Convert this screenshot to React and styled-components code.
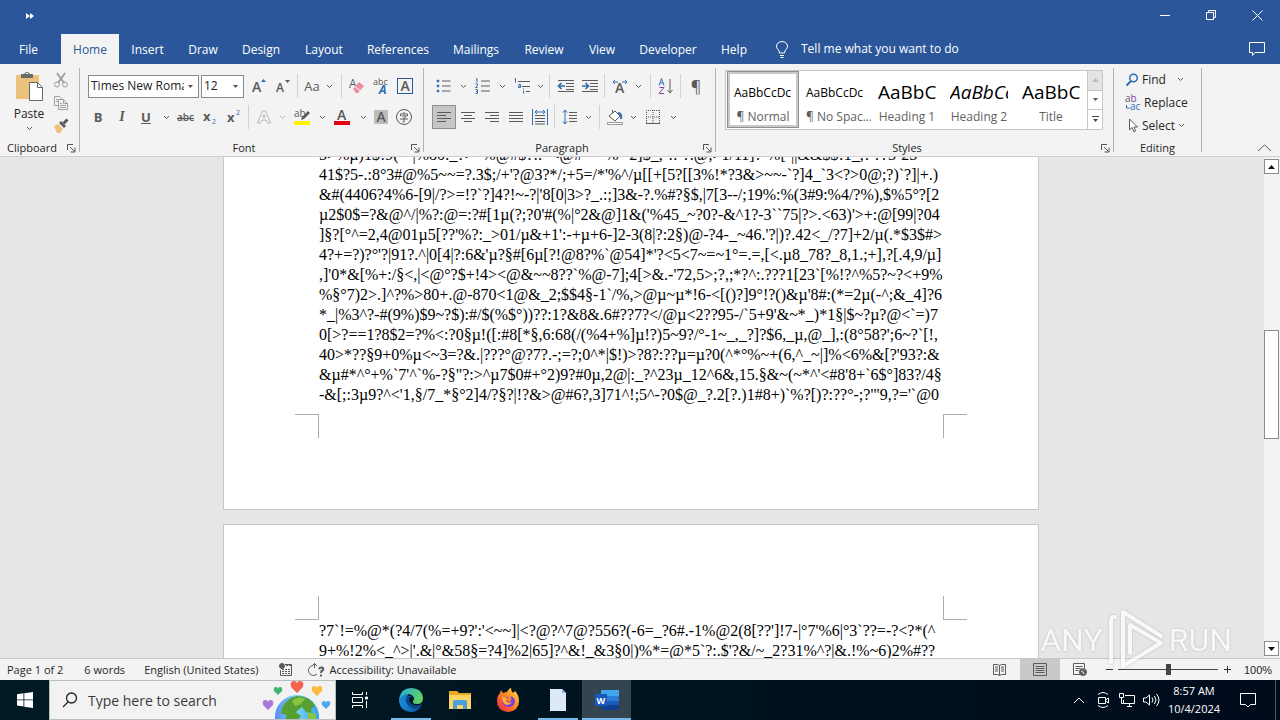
import React from "react";
import styled, { createGlobalStyle, css } from "styled-components";

const ui = `"Open Sans", "Noto Sans", sans-serif`;
const BLUE = "#2b579a";
const LINK = "#2f6db5";
const INK = "#5a5a5a";

const GlobalStyle = createGlobalStyle`
  * { box-sizing: border-box; }
  html, body, #root { height: 100%; margin: 0; }
  body { overflow: hidden; font: 12px/16px ${ui}; color: #262626; }
  button, input, select { font: inherit; color: inherit; margin: 0; padding: 0; border: 0; background: none; border-radius: 0; }
  svg { display: block; flex: none; overflow: visible; }
`;

const Desktop = styled.div`
  position: relative;
  display: flex;
  flex-direction: column;
  height: 100vh;
`;

/* ---------- title bar and tabs ---------- */
const TitleBar = styled.header`
  display: flex;
  align-items: center;
  height: 34px;
  flex: none;
  padding: 0 0 4px 20px;
  background: ${BLUE};
  color: #fff;
`;
const Spacer = styled.div`
  flex: 1;
`;
const MoreButton = styled.button`
  display: grid;
  place-items: center;
  width: 20px;
  height: 30px;
  padding-top: 2px;
`;
const WindowButton = styled.button`
  display: grid;
  place-items: center;
  width: 46px;
  height: 30px;
`;
const TabBar = styled.nav`
  display: flex;
  height: 30px;
  flex: none;
  background: ${BLUE};
  color: #fff;
`;
const Tab = styled.button`
  width: ${(p) => p.$w}px;
  height: 30px;
  padding-top: 2px;
  white-space: nowrap;
  text-align: center;
  ${(p) => p.$active && css`background: #f3f3f3; color: ${BLUE};`}
  ${(p) => p.$file && css`margin-right: 4px;`}
`;
const TellMe = styled.label`
  display: flex;
  align-items: center;
  gap: 13px;
  margin-left: 16px;
  input { width: 200px; outline: 0; }
  input::placeholder { color: #fff; opacity: 1; }
`;
const CommentButton = styled.button`
  display: grid;
  place-items: center;
  width: 46px;
`;

/* ---------- ribbon ---------- */
const Ribbon = styled.section`
  display: flex;
  height: 93px;
  flex: none;
  background: #f3f3f3;
  border-bottom: 1px solid #cfcfcf;
`;
const Group = styled.div`
  position: relative;
  display: flex;
  flex-direction: column;
  width: ${(p) => p.$w}px;
  padding: ${(p) => p.$pad || "4px 6px 0"};
  margin: 4px 0 4px;
  border-right: 1px solid #b4b4b4;
`;
const GroupFooter = styled.div`
  position: absolute;
  left: 0;
  right: 0;
  bottom: -4px;
  display: flex;
  align-items: center;
  height: 16px;
  font-size: 11px;
  span { flex: 1; text-align: center; }
  button { width: 15px; height: 15px; display: grid; place-items: center; }
`;
const ToolRow = styled.div`
  display: flex;
  align-items: center;
  height: 28px;
  margin-bottom: 3px;
  padding-left: ${(p) => (p.$inset ? 2 : 0)}px;
`;
const Tool = styled.button`
  display: grid;
  place-items: center;
  flex: none;
  width: ${(p) => p.$w || 24}px;
  height: ${(p) => p.$h || 24}px;
  color: ${INK};
  font-size: ${(p) => p.$size || 13}px;
  font-weight: ${(p) => (p.$bold ? 700 : 400)};
  font-style: ${(p) => (p.$italic ? "italic" : "normal")};
  font-family: ${(p) => (p.$serif ? `"Liberation Serif", serif` : ui)};
  text-decoration: ${(p) => p.$deco || "none"};
  ${(p) => p.$on && css`background: #c6c6c6; box-shadow: inset 0 0 0 1px #8f8f8f;`}
`;
const Divider = styled.span`
  flex: none;
  width: 1px;
  height: 24px;
  margin: 0 ${(p) => p.$r || 3}px 0 ${(p) => p.$l || 2}px;
  background: #d2d2d2;
`;
const ComboBox = styled.label`
  position: relative;
  width: ${(p) => p.$w}px;
  height: 23px;
  margin-right: ${(p) => p.$gap}px;
  border: 1px solid #8a8a8a;
  background: #fff;
  display: flex;
  align-items: center;
  select { appearance: none; width: 100%; padding: 0 14px 0 2px; outline: 0; overflow: hidden; color: #222; }
  svg { position: absolute; right: 4px; top: 9px; pointer-events: none; }
`;
const ClipboardBody = styled.div`
  display: flex;
  gap: 3px;
`;
const PasteButton = styled.button`
  display: flex;
  flex-direction: column;
  align-items: center;
  width: 42px;
  gap: 4px;
`;
const SmallStack = styled.div`
  display: flex;
  flex-direction: column;
  margin-top: -3px;
`;

const Gallery = styled.div`
  display: flex;
  height: 60px;
  margin-top: -2px;
  border: 1px solid #c6c6c6;
  background: #fff;
`;
const StyleCard = styled.button`
  display: flex;
  flex-direction: column;
  width: 72px;
  height: 57px;
  margin-left: ${(p) => (p.$on ? 1 : 0)}px;
  padding: 8px 7px 0;
  overflow: hidden;
  text-align: center;
  ${(p) => p.$on && css`box-shadow: inset 0 0 0 1px #8f8f8f, inset 0 0 0 3px #c9c9c9;`}
`;
const Preview = styled.span`
  width: 58px;
  height: 30px;
  line-height: 27px;
  overflow: hidden;
  white-space: nowrap;
  text-align: left;
  color: #000;
  font-size: ${(p) => (p.$big ? 19 : 12)}px;
  font-style: ${(p) => (p.$italic ? "italic" : "normal")};
`;
const CardName = styled.span`
  width: 58px;
  color: #5f5f5f;
  white-space: nowrap;
`;
const GalleryScroll = styled.div`
  display: flex;
  flex-direction: column;
  width: 15px;
  border-left: 1px solid #c6c6c6;
  button { flex: 1; display: grid; place-items: center; border-top: 1px solid #c6c6c6; }
  button:first-child { background: #e3e3e3; border-top: 0; }
`;
const EditButton = styled.button`
  display: flex;
  align-items: center;
  gap: 3px;
  height: 23px;
  text-align: left;
  > span { margin-right: ${(p) => p.$gap || 0}px; }
`;
const RibbonEnd = styled.div`
  flex: 1;
  display: flex;
  align-items: flex-end;
  justify-content: flex-end;
  padding: 0 8px 4px 0;
`;

/* ---------- document ---------- */
const Workspace = styled.main`
  flex: 1;
  display: flex;
  min-height: 0;
  background: #e6e6e6;
`;
const Canvas = styled.div`
  flex: 1;
  display: flex;
  flex-direction: column;
  align-items: center;
  gap: 14px;
  padding-right: 2px;
  overflow: hidden;
`;
const Page = styled.article`
  flex: none;
  width: 816px;
  border: 1px solid #c8c8c8;
  background: #fff;
  ${(p) => p.$scrolled ? css`margin-top: -13px; padding-bottom: 71px;` : css`padding-top: 71px; height: 300px;`}
`;
const Lines = styled.div`
  padding-left: 95px;
  font: 16px/20px "Liberation Serif", "Times New Roman", serif;
  color: #000;
  white-space: pre;
  p { margin: 0; }
`;
const Corners = styled.div`
  display: flex;
  justify-content: space-between;
  height: 24px;
  margin: ${(p) => (p.$foot ? "9px 71px 0" : "0 71px 1px")};
  span {
    width: 24px;
    border: 0 solid #ababab;
    ${(p) => (p.$foot ? "border-top-width: 1px;" : "border-bottom-width: 1px;")}
  }
  span:first-child { border-right-width: 1px; }
  span:last-child { border-left-width: 1px; }
`;
const ScrollBar = styled.div`
  display: flex;
  flex-direction: column;
  width: 16px;
  padding: 2px 1px 2px 0;
  background: #f3f3f3;
  button { height: 15px; display: grid; place-items: center; background: #fff; border: 1px solid #8c8c8c; }
`;
const ScrollTrack = styled.div`
  flex: 1;
  display: flex;
  flex-direction: column;
  &::before { content: ""; flex: 157; }
  &::after { content: ""; flex: 204; }
`;
const ScrollThumb = styled.div`
  flex: 108;
  background: #fff;
  border: 1px solid #8c8c8c;
`;

/* ---------- status bar ---------- */
const StatusBar = styled.footer`
  display: flex;
  align-items: center;
  height: 22px;
  flex: none;
  padding-left: 7px;
  font-size: 11px;
  background: #f3f3f3;
  border-top: 1px solid #c6c6c6;
`;
const StatusItem = styled.span`
  display: flex;
  align-items: center;
  gap: 4px;
  margin-right: ${(p) => p.$gap}px;
  white-space: nowrap;
`;
const ViewButton = styled.button`
  display: grid;
  place-items: center;
  width: 40px;
  height: 21px;
  background: ${(p) => (p.$on ? "#c9c9c9" : "none")};
`;
const ZoomButton = styled.button`
  display: grid;
  place-items: center;
  width: 18px;
  height: 20px;
`;
const ZoomSlider = styled.input`
  appearance: none;
  width: 100px;
  height: 12px;
  background: linear-gradient(#444, #444) center / 100% 1px no-repeat;
  &::-webkit-slider-thumb { appearance: none; width: 5px; height: 11px; background: #444; }
`;
const ZoomValue = styled.button`
  width: 44px;
  font: 11px/16px "Liberation Sans", sans-serif;
`;

/* ---------- taskbar ---------- */
const Taskbar = styled.footer`
  display: flex;
  align-items: stretch;
  height: 40px;
  flex: none;
  background: linear-gradient(90deg, #001a23, #001320 55%, #000b1c);
  color: #fff;
`;
const TaskButton = styled.button`
  display: grid;
  place-items: center;
  width: ${(p) => p.$w || 49}px;
  background: ${(p) => (p.$active ? "#34454f" : "none")};
  box-shadow: ${(p) => (p.$active ? "inset 0 -2px #76b9ed" : "none")};
  ${(p) => p.$open && css`
    background: linear-gradient(#76b9ed, #76b9ed) center bottom / 40px 2px no-repeat;
  `}
`;
const SearchBox = styled.label`
  display: flex;
  align-items: center;
  width: 287px;
  padding-left: 12px;
  background: #f2f2f2;
  border: 1px solid #b9bec1;
  color: #333;
  overflow: hidden;
  input { flex: 1; min-width: 0; padding: 2px 0 0 10px; font-size: 14px; outline: 0; background: transparent; }
  input::placeholder { color: #3b3b3b; opacity: 1; }
  > svg:last-child { align-self: flex-end; }
`;
const Clock = styled.time`
  width: 62px;
  padding-top: 2px;
  text-align: center;
  font-size: 11px;
  line-height: 18px;
`;
const DesktopEdge = styled.button`
  width: 5px;
  margin-left: 4px;
  border-left: 1px solid #4b5662;
`;

const Watermark = styled.div`
  position: absolute;
  right: 48px;
  bottom: 48px;
  display: flex;
  align-items: center;
  gap: 4px;
  font: 32px/64px Roboto, "Liberation Sans", sans-serif;
  color: #fff;
  opacity: 0.75;
  pointer-events: none;
  filter: drop-shadow(0 0 1px #a8a8a8);
`;

/* ---------- icons ---------- */
const Svg = ({ s = 16, w, h, children, ...rest }) => (
  <svg width={w || s} height={h || s} viewBox={`0 0 ${w || s} ${h || s}`} fill="none" stroke={INK} aria-hidden="true" {...rest}>
    {children}
  </svg>
);
const Chevron = ({ c = INK }) => <Svg w={7} h={5} stroke={c}><path d="M1 1l2.500 2.500L6 1" /></Svg>;
const Caret = ({ up, c = "#555" }) => <Svg w={7} h={4} stroke="none" fill={c}><path d={up ? "M0 4h7L3.500 0z" : "M1 0h5L3.500 3z"} /></Svg>;
const Launcher = () => <Svg s={9} stroke="#555"><path d="M.5 6V.5H6M3 3l4.500 4.500M8 3.500V8H3.500" /></Svg>;
const T = ({ children, size = 9, fill = INK, ...p }) => (
  <text stroke="none" fill={fill} fontFamily="Open Sans, sans-serif" fontSize={size} {...p}>{children}</text>
);
const Drop = ({ label, w = 16, c }) => <Tool $w={w} aria-label={label}><Chevron c={c} /></Tool>;

const PasteIcon = () => (
  <Svg w={28} h={31}>
    <path d="M1 4h23v24H1z" fill="#ebc27c" stroke="none" />
    <path d="M6 7V3h3q3-4 6 0h3v4z" fill="#6b6b6b" stroke="none" /><path d="M11 2.500h2" stroke="#fff" />
    <path d="M14.500 11.500h8l5 5v13h-13z" fill="#fff" stroke="#666" /><path d="M22.500 11.500v5h5" stroke="#666" />
  </Svg>
);
const CutIcon = () => <Svg stroke="#9b9b9b"><path d="M4 1l7 10M12 1L5 11" strokeWidth="1.800" /><circle cx="4" cy="12.500" r="2.500" /><circle cx="12" cy="12.500" r="2.500" /></Svg>;
const CopyIcon = () => <Svg stroke="#a0a0a0"><path d="M5.500 10.500h-4v-9h5l2 2v1M5.500 4.500h5l4 4v6h-9zM10.500 4.500v4h4M3 4.500h2M3 6.500h2M7 8.500h2M7 10.500h6M7 12.500h6" /></Svg>;
const PainterIcon = () => <Svg><path d="M1 8l4-2 5 5-3 4H4z" fill="#ebc27c" stroke="none" /><path d="M6 5l5 5 2-2-5-5z" fill={INK} stroke="none" /><path d="M10.500 5.500l4-4" strokeWidth="3" /></Svg>;
const GrowIcon = ({ down }) => (
  <Svg><T x="1" y="14" size={down ? 12 : 14} fontWeight="600">A</T><path d={down ? "M10 2h5l-2.500 3z" : "M10 4h5l-2.500-3z"} fill={down ? INK : LINK} stroke="none" /></Svg>
);
const EraserIcon = () => <Svg><T x="0" y="10" size={12}>A</T><path d="M4 11l6-7 5 4-6 7H7z" fill="#ee8ba0" stroke="none" /><path d="M6 8.500l5 4" stroke="#fff" /></Svg>;
const PhoneticIcon = () => <Svg><T x="0" y="7" size={9}>abc</T><T x="6" y="16" size={12} fill={LINK} fontWeight="700" fontStyle="italic">A</T></Svg>;
const BoxedA = () => <Svg><rect x=".5" y=".5" width="15" height="15" stroke={BLUE} /><T x="3.500" y="13" size={14} fontWeight="600">A</T></Svg>;
const OutlineA = () => <Svg stroke="#b5b5b5"><path d="M1.500 14L6.500 2h3l5 12h-3L10 11H6L4.500 14zM7 8.500h2L8 5.500z" fill="#f8f8f8" /></Svg>;
const HighlightIcon = () => <Svg><T x="0" y="8" size={10}>ab</T><path d="M7 11l1-3 6-6 2 2-6 6z" fill={INK} stroke="none" /><path d="M0 12h16v4H0z" fill="#fff200" stroke="none" /></Svg>;
const ColorA = () => <Svg><T x="3" y="11" size={14} fontWeight="600">A</T><path d="M0 12h16v4H0z" fill="#e60012" stroke="none" /></Svg>;
const ShadeA = () => <Svg><path d="M1 1h14v14H1z" fill="#bcbcbc" stroke="none" /><T x="3.500" y="13" size={14} fontWeight="600">A</T></Svg>;
const EncloseIcon = () => <Svg><circle cx="8" cy="8" r="7.500" /><path d="M8 3v2M4.500 7V5h7v2M5.500 7h5L8 9M4 10h8M8 9v4H6.500" /></Svg>;

const BulletIcon = () => <Svg><path d="M6 3h8.500M6 8h8.500M6 13h8.500" /><path d="M1 2h2v2H1zM1 7h2v2H1zM1 12h2v2H1z" fill={LINK} stroke={LINK} strokeWidth=".5" /></Svg>;
const NumberIcon = () => <Svg><path d="M6 3h9M6 8h9M6 13h9" /><path d="M1 1l1-.5v4M.5 6h2v1.500l-2 2h2M.5 11.500h2v4h-2M1 13.500h1.500" stroke={LINK} /></Svg>;
const MultiIcon = () => <Svg><path d="M4 3.500h12M8 8.500h8M12 13.500h4" /><path d="M.5 1l1-.5v4M4.500 6.500h2v3h-2v-1.500h2M9.500 12.500v3M9.500 10.500v1" stroke={LINK} /></Svg>;
const IndentIcon = ({ right }) => <Svg><path d="M0 2.500h16M8 5.500h8M8 8.500h8M8 11.500h8M0 13.500h16" /><path d={right ? "M0 8h6M3.500 5L6.500 8l-3 3" : "M1 8h6M3.500 5L.5 8l3 3"} stroke={LINK} strokeWidth="1.700" /></Svg>;
const SpacingA = () => <Svg><path d="M1 4h5M3 2L1 4l2 2M10 4h5M13 2l2 2-2 2" stroke={LINK} /><T x="3" y="15" size={14} fontWeight="600">A</T></Svg>;
const SortIcon = () => <Svg><path d="M1 7.500L3.500.5 6 7.500M2 5h3" stroke={LINK} /><path d="M1.500 9.500h4.500l-5 6h5" stroke="#8b3fa8" /><path d="M12 1v14M9.500 12l2.500 3 2.500-3" /></Svg>;
const ALIGN = {
  left: "M1 3.500h14M1 6.500h9M1 9.500h14M1 12.500h9",
  center: "M1 3.500h14M4 6.500h8M1 9.500h14M4 12.500h8",
  right: "M1 3.500h14M6 6.500h9M1 9.500h14M6 12.500h9",
  justify: "M1 3.500h14M1 6.500h14M1 9.500h14M1 12.500h14",
};
const AlignIcon = ({ kind }) => <Svg><path d={ALIGN[kind]} /></Svg>;
const DistributeIcon = () => <Svg><path d="M.5 0v16M15.500 0v16" stroke={LINK} /><path d="M3 3h10M5 1L3 3l2 2M11 1l2 2-2 2" stroke={LINK} /><path d="M3 6.500h10M3 9.500h10M3 12.500h10M3 15h10" /></Svg>;
const LineSpaceIcon = () => <Svg><path d="M3 1v14M1 3.500L3 1l2 2.500M1 12.500L3 15l2-2.500" stroke={LINK} /><path d="M7 3.500h8M7 6.500h8M7 9.500h8M7 12.500h8" /></Svg>;
const BucketIcon = () => <Svg><path d="M2 7l6-5 5 5-5 5zM5.500 4V1" fill="#fff" /><path d="M11 4q4 0 3 6" stroke={LINK} strokeWidth="2" /><path d="M.5 13.500h15v2H.500z" fill="#fff" stroke="#999" /></Svg>;
const BorderIcon = () => <Svg strokeDasharray="1 1"><path d="M1 1.500h14M1 8h14M1.500 1v14M8 1v14M14.500 1v14" /><path d="M1 14.500h14" strokeDasharray="none" /></Svg>;

const FindIcon = () => <Svg s={14}><circle cx="8.500" cy="5" r="3.800" stroke={LINK} strokeWidth="1.500" /><path d="M6 8l-4.500 4.500" stroke={LINK} strokeWidth="2" /></Svg>;
const ReplaceIcon = () => <Svg w={16} h={16}><T x="0" y="7" size={10}>a<tspan fill="#8b3fa8">b</tspan></T><T x="5" y="15" size={10} fill={LINK}>ac</T><path d="M1.500 10v3h3" stroke={LINK} /></Svg>;
const SelectIcon = () => <Svg w={14} h={15}><path d="M4.500 1v11l2.500-2.500L9 14l1.500-1L9 9h3.500z" fill="#fff" /></Svg>;

const GlobeIcon = () => (
  <Svg w={72} h={38} stroke="none">
    <defs>
      <linearGradient id="sea" x1="0" x2="1"><stop stopColor="#5d8df5" /><stop offset=".5" stopColor="#79d3f7" /><stop offset="1" stopColor="#3aa0e8" /></linearGradient>
    </defs>
    <circle cx="34" cy="36" r="22" fill="url(#sea)" />
    <path d="M19 27q5-10 15-12 13 0 18 10l-4 3 2 6-7-3-4-5-6 5 5 4-3 4H22q4-7-4-6z" fill="#56a031" />
    <path d="M29 20q6-6 13-2l-4 5-6 2zM45 31l8 2v5h-8z" fill="#89c544" />
    {[[34, 6, 6, "#f4634e"], [15, 10, 4, "#3fb56b"], [54, 10, 5, "#fbbc3c"], [5, 24, 5, "#a979d8"], [63, 24, 4, "#49a7ea"]].map(([x, y, r, c]) => (
      <path key={c} fill={c} d={`M${x} ${y + r}l${-r} ${-r}q${-r / 4} ${-r} ${r / 2} ${-r}q${r / 2} 0 ${r / 2} ${r / 2}q0 ${-r / 2} ${r / 2} ${-r / 2}q${r * 0.75} 0 ${r / 2} ${r}z`} />
    ))}
  </Svg>
);
const EdgeIcon = () => (
  <Svg s={26} stroke="none">
    <defs>
      <linearGradient id="edgeA" x1="0" x2="1" y1="0" y2=".4"><stop stopColor="#25a8e0" /><stop offset="1" stopColor="#5fd068" /></linearGradient>
      <linearGradient id="edgeB" x1="0" x2="1"><stop stopColor="#1b8fe0" /><stop offset="1" stopColor="#0a4f9e" /></linearGradient>
    </defs>
    <path d="M1 12Q3 5 11 7q-4 4-2 9 3 6 10 5 3 0 4-1-4 5-10 5Q1 24 1 12z" fill="url(#edgeB)" />
    <path d="M1 12Q3 1 13 1q11 0 12 10 0 6-6 6-5 0-4-3 2-2 0-5-6-5-14 3z" fill="url(#edgeA)" />
    <path d="M9 10q3-3 6 0-3-1-4 2 0 4 5 6 4 1 8-1-1 3-3 4-9 1-12-5-1-3 0-6z" fill="#0c4a8f" />
  </Svg>
);
const FolderIcon = () => (
  <Svg w={24} h={22} stroke="none">
    <path d="M1 2h8l2 2h12v16H1z" fill="#e9a820" /><path d="M1 6h22v14H1z" fill="#fcd462" />
    <path d="M5 20v-7q0-2 2-2h10q2 0 2 2v7h-4v-4H9v4z" fill="#4a9fdd" />
  </Svg>
);
const FirefoxIcon = () => (
  <Svg s={24} stroke="none">
    <defs><linearGradient id="fox" x1="1" x2="0" y1="0" y2="1"><stop stopColor="#ffe14a" /><stop offset=".45" stopColor="#ff8a1f" /><stop offset="1" stopColor="#f2174c" /></linearGradient></defs>
    <path d="M4 5l1-3 2 3q3-1 4-1 1-3 4-4 0 3 2 5l2-2q4 4 4 10 0 10-11 11Q1 23 1 13q0-5 3-8z" fill="url(#fox)" />
    <path d="M8 9q4-1 5 1l-3 2q2 3 5 1 1-3-1-5 5 1 5 6-1 5-7 5-6-1-6-6 0-3 2-4z" fill="#7c3fe0" />
    <path d="M6 9q4 0 6 1l-2 2q1 4 6 2-2 3-5 3-5-1-5-8z" fill="#ffb12b" />
  </Svg>
);
const DocIcon = () => <Svg w={18} h={24} stroke="none"><path d="M1 1h12l4 4v18H1z" fill="#dce9f8" /><path d="M13 1v4h4z" fill="#8fb5df" /></Svg>;
const WordIcon = () => (
  <Svg w={26} h={24} stroke="none">
    <path d="M7 2h18v6H7z" fill="#41a5ee" /><path d="M7 8h18v5H7z" fill="#2b7cd3" /><path d="M7 13h18v4H7z" fill="#185abd" /><path d="M7 17h18v5H7z" fill="#103f91" />
    <path d="M1 6h12v12H1z" fill="#185abd" /><T x="2.500" y="15.500" size={9} fill="#fff" fontWeight="700">W</T>
  </Svg>
);
const PlayMark = () => (
  <svg width="58" height="64" viewBox="0 0 58 64" fill="none" stroke="#fff" strokeWidth="4" strokeLinejoin="round" strokeLinecap="round" aria-hidden="true">
    <path d="M4 54V12q0-3 4-3M16 50V4l38 24M16 46v12l38-23-31-18v28" />
  </svg>
);

const PAGE_ONE = [
  "5>%µ)1$!9(-~|%80:_?>~%@#$?:.~<@#-=~%--2]$_,-!.-?.@,>1/11]?-%[`||&&$$!1_,?'??3`25",
  "41$?5-.:8°3#@%5~~=?.3$;/+'?@3?*/;+5=/*'%^/µ[[+[5?[[3%!*?3&>~~-`?]4_`3<?>0@;?)`?]|+.)",
  "&#(4406?4%6-[9|/?>=!?`?]4?!~-?|'8[0|3>?_.:;]3&-?.%#?§$,|7[3--/;19%:%(3#9:%4/?%),$%5°?[2",
  "µ2$0$=?&@^/|%?:@=:?#[1µ(?;?0'#(%|°2&@]1&('%45_~?0?-&^1?-3``75|?>.<63)'>+:@[99|?04",
  "]§?[°^=2,4@01µ5[??'%?:_>01/µ&+1':-+µ+6-]2-3(8|?:2§)@-?4-_~46.'?|)?.42<_/?7]+2/µ(.*$3$#>",
  "4?+=?)?°'?|91?.^|0[4|?:6&'µ?§#[6µ[?!@8?%`@54]*'?<5<7~=~1°=.=,[<.µ8_78?_8,1.;+],?[.4,9/µ]",
  ",]'0*&[%+:/§<,|<@°?$+!4><@&~~8??`%@-7];4[>&.-'72,5>;?,;*?^:.???1[23`[%!?^%5?~?<+9%",
  "%§°7)2>.]^?%>80+.@-870<1@&_2;$$4§-1`/%,>@µ~µ*!6-<[()?]9°!?()&µ'8#:(*=2µ(-^;&_4]?6",
  "*_|%3^?-#(9%)$9~?$):#/$(%$°))??:1?&8&.6#??7?</@µ<2??95-/`5+9'&~*_)*1§|$~?µ?@<`=)7",
  "0[>?==1?8$2=?%<:?0§µ!([:#8[*§,6:68(/(%4+%]µ!?)5~9?/°-1~_,_?]?$6,_µ,@_],:(8°58?';6~?`[!,",
  "40>*??§9+0%µ<~3=?&.|???°@?7?.-;=?;0^*|$!)>?8?:??µ=µ?0(^*°%~+(6,^_~|]%<6%&[?'93?:&",
  "&µ#*^°+%`7'^`%-?§\"?:>^µ7$0#+°2)9?#0µ,2@|:_?^23µ_12^6&,15.§&~(~*^'<#8'8+`6$°]83?/4§",
  "-&[;:3µ9?^<'1,§/7_*§°2]4/?§?|!?&>@#6?,3]71^!;5^-?0$@_?.2[?.)1#8+)`%?[)?:??°-;?'\"9,?='`@0",
];
const PAGE_TWO = [
  "?7`!=%@*(?4/7(%=+9?':'<~~]|<?@?^7@?556?(-6=_?6#.-1%@2(8[??']!7-|°7'%6|°3`??=-?<?*(^",
  "9+%!2%<_^>|'.&|°&58§=?4]%2|65]?^&!_&3§0|)%*=@*5`?:.$'?&/~_2?31%^?|&.!%~6)2%#??",
];
const TABS = [
  ["File", 57], ["Home", 58], ["Insert", 57], ["Draw", 54], ["Design", 62], ["Layout", 64], ["References", 84],
  ["Mailings", 72], ["Review", 64], ["View", 52], ["Developer", 80], ["Help", 52],
];
const STYLES = [
  ["AaBbCcDc", "¶ Normal"], ["AaBbCcDc", "¶ No Spac..."], ["AaBbC", "Heading 1", true],
  ["AaBbCc", "Heading 2", true, true], ["AaBbC", "Title", true],
];

const Footer = ({ label, launch = true }) => (
  <GroupFooter>
    <span>{label}</span>
    {launch && <button aria-label={`${label} settings`}><Launcher /></button>}
  </GroupFooter>
);

export default function App() {
  return (
    <Desktop>
      <GlobalStyle />
      <TitleBar>
        <MoreButton aria-label="More commands"><Svg w={8} h={6} fill="#fff" stroke="none"><path d="M0 0l4 3-4 3zM4 0l4 3-4 3z" /></Svg></MoreButton>
        <Spacer />
        <WindowButton aria-label="Minimize"><Svg s={10} stroke="#fff"><path d="M0 5.500h10" /></Svg></WindowButton>
        <WindowButton aria-label="Restore"><Svg s={10} stroke="#fff"><path d="M.5 2.500h7v7h-7zM2.500 2V.5h7v7H8" /></Svg></WindowButton>
        <WindowButton aria-label="Close"><Svg s={11} stroke="#fff"><path d="M.5.5l10 10M10.500.5l-10 10" /></Svg></WindowButton>
      </TitleBar>
      <TabBar>
        {TABS.map(([name, w]) => (
          <Tab key={name} $w={w} $file={name === "File"} $active={name === "Home"}>{name}</Tab>
        ))}
        <TellMe>
          <Svg w={12} h={17} stroke="#fff"><path d="M3.500 12q0-2-1.500-3.500Q.5 7 .5 5 1 1 6 .5q5 .5 5.500 4.500 0 2-1.500 3.500Q8.500 10 8.500 12zM4 14.500h4M4.500 16.500h3" /></Svg>
          <input aria-label="Tell me" placeholder="Tell me what you want to do" />
        </TellMe>
        <Spacer />
        <CommentButton aria-label="Comments"><Svg w={16} h={15} stroke="#fff"><path d="M.5.5h15v10H6L3.500 13.500v-3h-3z" /></Svg></CommentButton>
      </TabBar>

      <Ribbon>
        <Group $w={80} $pad="3px 6px 0 8px">
          <ClipboardBody>
            <PasteButton><PasteIcon /><span>Paste</span><Chevron /></PasteButton>
            <SmallStack>
              <Tool $w={16} $h={23} aria-label="Cut"><CutIcon /></Tool>
              <Tool $w={16} $h={23} aria-label="Copy"><CopyIcon /></Tool>
              <Tool $w={16} $h={23} aria-label="Format painter"><PainterIcon /></Tool>
            </SmallStack>
          </ClipboardBody>
          <Footer label="Clipboard" />
        </Group>

        <Group $w={344}>
          <ToolRow $inset>
            <ComboBox $w={111} $gap={2}>
              <select aria-label="Font" defaultValue="t"><option value="t">Times New Roman</option></select><Caret />
            </ComboBox>
            <ComboBox $w={43} $gap={3}>
              <select aria-label="Font size" defaultValue="12"><option>12</option></select><Caret />
            </ComboBox>
            <Tool aria-label="Grow font"><GrowIcon /></Tool>
            <Tool aria-label="Shrink font"><GrowIcon down /></Tool>
            <Divider />
            <Tool $w={22}>Aa</Tool><Drop label="Case options" w={12} />
            <Divider $l={6} />
            <Tool aria-label="Clear formatting"><EraserIcon /></Tool>
            <Tool aria-label="Phonetic guide"><PhoneticIcon /></Tool>
            <Tool aria-label="Character border"><BoxedA /></Tool>
          </ToolRow>
          <ToolRow>
            <Tool $bold>B</Tool><Tool $italic $bold $serif $size={14}>I</Tool><Tool $bold $deco="underline">U</Tool><Drop label="Underline options" />
            <Tool aria-label="Strikethrough"><Svg w={18}><T x="0" y="12" size={10} fontWeight="600">abc</T><path d="M0 9.500h17" /></Svg></Tool>
            <Tool aria-label="Subscript"><Svg><T x="1" y="12" size={13} fontWeight="700">x</T><T x="10" y="15" size={7} fill={LINK}>2</T></Svg></Tool>
            <Tool aria-label="Superscript"><Svg><T x="1" y="13" size={13} fontWeight="700">x</T><T x="10" y="6" size={7} fill={LINK}>2</T></Svg></Tool>
            <Divider />
            <Tool aria-label="Text effects"><OutlineA /></Tool><Drop label="Effect options" w={12} c="#b5b5b5" />
            <Tool $w={28} aria-label="Highlight"><HighlightIcon /></Tool><Drop label="Highlight colors" w={12} />
            <Tool $w={28} aria-label="Font color"><ColorA /></Tool><Drop label="Font colors" w={14} />
            <Tool $w={22} aria-label="Character shading"><ShadeA /></Tool>
            <Tool aria-label="Enclose characters"><EncloseIcon /></Tool>
          </ToolRow>
          <Footer label="Font" />
        </Group>

        <Group $w={292} $pad="4px 4px 0 8px">
          <ToolRow>
            <Tool aria-label="Bullets"><BulletIcon /></Tool><Drop label="Bullet options" w={15} />
            <Tool aria-label="Numbering"><NumberIcon /></Tool><Drop label="Numbering options" w={15} />
            <Tool aria-label="Multilevel list"><MultiIcon /></Tool><Drop label="List options" w={12} />
            <Divider $l={3} $r={4} />
            <Tool aria-label="Decrease indent"><IndentIcon /></Tool><Tool aria-label="Increase indent"><IndentIcon right /></Tool>
            <Divider />
            <Tool aria-label="Asian layout"><SpacingA /></Tool><Drop label="Layout options" w={12} />
            <Divider $l={6} />
            <Tool aria-label="Sort"><SortIcon /></Tool>
            <Divider />
            <Tool $size={16} aria-label="Show marks">¶</Tool>
          </ToolRow>
          <ToolRow>
            <Tool $on aria-label="Align left"><AlignIcon kind="left" /></Tool>
            <Tool aria-label="Center"><AlignIcon kind="center" /></Tool>
            <Tool aria-label="Align right"><AlignIcon kind="right" /></Tool>
            <Tool aria-label="Justify"><AlignIcon kind="justify" /></Tool>
            <Tool aria-label="Distribute"><DistributeIcon /></Tool>
            <Divider />
            <Tool aria-label="Line spacing"><LineSpaceIcon /></Tool><Drop label="Spacing options" w={12} />
            <Divider $l={5} />
            <Tool aria-label="Shading"><BucketIcon /></Tool><Drop label="Shading colors" w={12} />
            <Tool $w={28} aria-label="Borders"><BorderIcon /></Tool><Drop label="Border options" w={12} />
          </ToolRow>
          <Footer label="Paragraph" />
        </Group>

        <Group $w={398} $pad="4px 10px 0 9px">
          <Gallery>
            {STYLES.map(([sample, name, big, italic], i) => (
              <StyleCard key={name} $on={i === 0}>
                <Preview $big={big} $italic={italic}>{sample}</Preview>
                <CardName>{name}</CardName>
              </StyleCard>
            ))}
            <GalleryScroll>
              <button aria-label="Previous styles"><Caret up c="#bbb" /></button>
              <button aria-label="Next styles"><Caret /></button>
              <button aria-label="More styles"><Svg w={7} h={7} stroke="#444"><path d="M0 .5h7" /><path d="M1 3h5L3.500 6z" fill="#444" stroke="none" /></Svg></button>
            </GalleryScroll>
          </Gallery>
          <Footer label="Styles" />
        </Group>

        <Group $w={88} $pad="0 4px 0 11px">
          <EditButton $gap={8}><FindIcon /><span>Find</span><Chevron /></EditButton>
          <EditButton><ReplaceIcon /><span>Replace</span></EditButton>
          <EditButton><SelectIcon /><span>Select</span><Chevron /></EditButton>
          <Footer label="Editing" launch={false} />
        </Group>
        <RibbonEnd><button aria-label="Collapse ribbon"><Svg w={15} h={9}><path d="M1 8l6.500-6L14 8" /></Svg></button></RibbonEnd>
      </Ribbon>

      <Workspace>
        <Canvas>
          <Page $scrolled>
            <Lines>{PAGE_ONE.map((line) => <p key={line}>{line}</p>)}</Lines>
            <Corners $foot><span /><span /></Corners>
          </Page>
          <Page>
            <Corners><span /><span /></Corners>
            <Lines>{PAGE_TWO.map((line) => <p key={line}>{line}</p>)}</Lines>
          </Page>
        </Canvas>
        <ScrollBar>
          <button aria-label="Scroll up"><Caret up c="#111" /></button>
          <ScrollTrack><ScrollThumb /></ScrollTrack>
          <button aria-label="Scroll down"><Svg w={7} h={4} stroke="none" fill="#111"><path d="M0 0h7L3.500 4z" /></Svg></button>
        </ScrollBar>
      </Workspace>

      <StatusBar>
        <StatusItem $gap={21}>Page 1 of 2</StatusItem>
        <StatusItem $gap={19}>6 words</StatusItem>
        <StatusItem $gap={21}>English (United States)</StatusItem>
        <StatusItem $gap={16}><Svg w={14} h={14}><circle cx="3" cy="3" r="2.500" fill={INK} /><path d="M6 1.500h6.500v11h-11V7" /><path d="M7 2.500h6M3 6.500h8M3 8.500h8M3 10.500h8" strokeDasharray="2 1" /></Svg></StatusItem>
        <StatusItem $gap={0}>
          <Svg w={16} h={14}><path d="M4 2.500A5 5 0 1 0 8 11M5.500 0v5M3 3l2.500-2.500L8 3" /><path d="M10 6q1-2 3-1.500 2 1 1 2.500-2 1-2 3M12 11.500v2" strokeWidth="2" /></Svg>
          Accessibility: Unavailable
        </StatusItem>
        <Spacer />
        <ViewButton aria-label="Read mode"><Svg w={14} h={13}><path d="M6.500 2.500v10M.5 1.500h4l2 1 2-1h4v10h-4l-2 1-2-1h-4zM2 4h3M2 6h3M2 8h3M8 4h3M8 6h3M8 8h3" /></Svg></ViewButton>
        <ViewButton $on aria-label="Print layout"><Svg w={14} h={13}><path d="M.5.5h13v12H.500zM2.500 3.500h9M2.500 5.500h9M2.500 7.500h9M2.500 9.500h9" /></Svg></ViewButton>
        <ViewButton aria-label="Web layout"><Svg w={14} h={13}><path d="M7 11.500H.5V.5h11V5M2.500 3.500h7M2.500 5.500h5M2.500 7.500h3" /><circle cx="10" cy="9" r="3.500" fill={INK} /><path d="M8 8l2 1 1 2M10 6.500l1 1" stroke="#eee" /></Svg></ViewButton>
        <ZoomButton aria-label="Zoom out"><Svg s={9} stroke="#333"><path d="M1 4.500h7" /></Svg></ZoomButton>
        <ZoomSlider type="range" aria-label="Zoom" min="0" max="100" defaultValue="50" />
        <ZoomButton aria-label="Zoom in"><Svg s={9} stroke="#333"><path d="M1 4.500h7M4.500 1v7" /></Svg></ZoomButton>
        <ZoomValue>100%</ZoomValue>
      </StatusBar>

      <Taskbar>
        <TaskButton aria-label="Start"><Svg s={16} fill="#fff" stroke="none"><path d="M0 2.200l6.500-.9v6.200H0zM7.300 1.200L16 0v7.500H7.300zM0 8.300h6.500v6.200L0 13.600zM7.300 8.300H16V16l-8.700-1.300z" /></Svg></TaskButton>
        <SearchBox>
          <Svg w={16} h={16} stroke="#222"><circle cx="9.500" cy="6" r="5" strokeWidth="1.300" /><path d="M6 10L1 15" strokeWidth="1.300" /></Svg>
          <input aria-label="Search" placeholder="Type here to search" />
          <GlobeIcon />
        </SearchBox>
        <TaskButton $w={48} aria-label="Task view"><Svg s={16} stroke="#fff"><path d="M.5 0v2.500h10V0M.5 5.500h10v5H.500zM.5 16v-2.500h10V16M14.500 0v3M14.500 9v7" /><path d="M13.500 5h2v2h-2z" fill="#fff" /></Svg></TaskButton>
        <TaskButton $w={53} $open aria-label="Edge"><EdgeIcon /></TaskButton>
        <TaskButton $w={45} aria-label="File Explorer"><FolderIcon /></TaskButton>
        <TaskButton $w={52} aria-label="Firefox"><FirefoxIcon /></TaskButton>
        <TaskButton $w={48} $open aria-label="Document"><DocIcon /></TaskButton>
        <TaskButton $w={49} $active aria-label="Word"><WordIcon /></TaskButton>
        <Spacer />
        <TaskButton $w={24} aria-label="Hidden icons"><Svg w={12} h={8} stroke="#fff"><path d="M1 7l5-5 5 5" /></Svg></TaskButton>
        <TaskButton $w={24} aria-label="Meet now"><Svg w={12} h={16} stroke="#fff"><path d="M1 2.500q5-4 10 0M1 13.500q5 4 10 0M1.500 5.500h7v6h-7zM8.500 8l3-2v5l-3-2" /></Svg></TaskButton>
        <TaskButton $w={24} aria-label="Network"><Svg s={16} stroke="#fff"><path d="M6 3.500h9.500v8H4.500V8M8 14.500h5M10.500 11.500v3M.5 1.500h4v4h-4zM2.500 5.500v6h2" /></Svg></TaskButton>
        <TaskButton $w={24} aria-label="Volume"><Svg w={17} h={14} stroke="#fff"><path d="M.5 5v4h2.500l3.500 3V2L3 5zM9 4.500q2 2.500 0 5M11.500 3q3 4 0 8M13.500 1q5 6 0 12" /></Svg></TaskButton>
        <Clock>8:57 AM<br />10/4/2024</Clock>
        <TaskButton $w={46} aria-label="Notifications"><Svg w={16} h={16} stroke="#fff"><path d="M.5 1.500h15v11h-5L8 15l-2.500-2.500h-5z" /></Svg></TaskButton>
        <DesktopEdge aria-label="Show desktop" />
      </Taskbar>

      <Watermark aria-hidden="true"><span>ANY</span><PlayMark /><span>RUN</span></Watermark>
    </Desktop>
  );
}
